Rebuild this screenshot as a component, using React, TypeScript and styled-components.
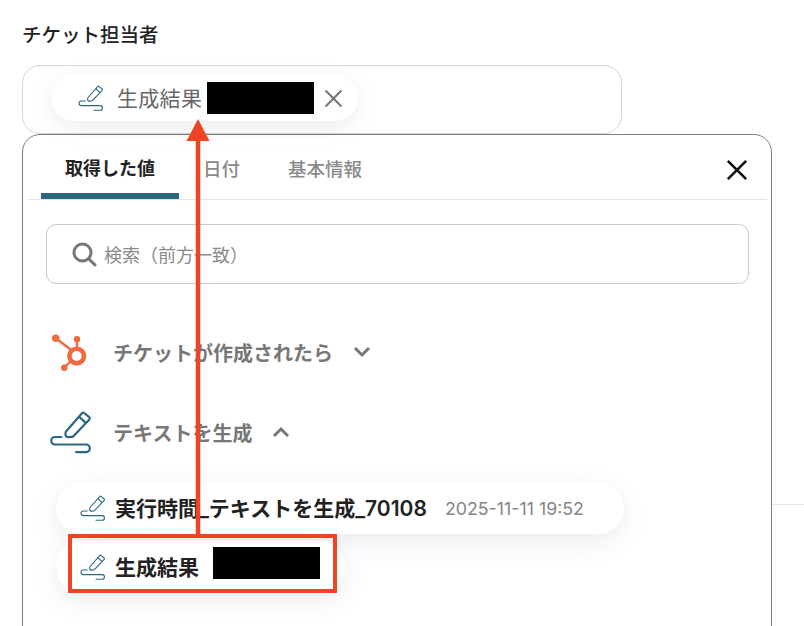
import React from 'react';
import styled, { createGlobalStyle } from 'styled-components';

const GlobalStyle = createGlobalStyle`
  html, body {
    margin: 0;
    background: #fff;
    font-family: Inter, "Noto Sans CJK JP", sans-serif;
  }
`;

const Page = styled.div`
  position: relative;
  width: 804px;
  height: 626px;
  overflow: hidden;
  padding: 22px 0 0 22px;
  box-sizing: border-box;
  background: linear-gradient(#e6e6e6, #e6e6e6) no-repeat 772px 504px / 32px 1px #fff;
`;

const Label = styled.div`
  font-size: 19.5px;
  line-height: 26px;
  font-weight: 500;
  color: #222;
  margin-bottom: 17px;
`;

const Field = styled.div`
  width: 600px;
  height: 69px;
  box-sizing: border-box;
  border: 1px solid #d4d5da;
  border-radius: 18px;
  padding: 9px 0 0 28px;
`;

const Chip = styled.div`
  display: inline-flex;
  align-items: center;
  height: 46px;
  width: 307px;
  box-sizing: border-box;
  padding-left: 27px;
  border-radius: 23px;
  background: #fff;
  box-shadow: 0 6px 24px rgba(0, 0, 0, 0.08);
  color: #666;
  font-size: 21px;
`;

const ChipText = styled.span`
  margin-left: 13px;
  white-space: nowrap;
  letter-spacing: 0.3px;
  margin-bottom: 2px;
`;

const Redacted = styled.span<{ $gap: number; $lift: number }>`
  display: inline-block;
  flex: none;
  width: 107px;
  height: 32px;
  margin-left: ${p => p.$gap}px;
  margin-bottom: ${p => p.$lift}px;
  background: #000;
`;

const ChipClose = styled.svg`
  flex: none;
  width: 19px;
  height: 19px;
  margin-left: 10px;
  stroke: #777;
  stroke-width: 2;
  fill: none;
`;

const Panel = styled.div`
  width: 750px;
  height: 520px;
  box-sizing: border-box;
  border: 1px solid #7d7d7d;
  border-radius: 18px;
  background: #fff;
`;

const TabBar = styled.div`
  display: flex;
  align-items: flex-end;
  position: relative;
  height: 64px;
  margin: 0 4px 0 5px;
  padding-left: 13px;
  border-bottom: 1px solid #e4e4e6;
`;

const Tab = styled.div<{ $active?: boolean }>`
  height: 58px;
  box-sizing: border-box;
  padding: 15px 24px 0;
  font-size: ${p => (p.$active ? 18 : 18.5)}px;
  line-height: 26px;
  font-weight: ${p => (p.$active ? 700 : 500)};
  color: ${p => (p.$active ? '#222' : '#8a8a8a')};
  border-bottom: ${p => (p.$active ? '6px solid #2b6680' : '6px solid transparent')};
  border-radius: ${p => (p.$active ? '6px 6px 0 0' : '0')};
  white-space: nowrap;
`;

const CloseIcon = styled.svg`
  margin-left: auto;
  align-self: flex-start;
  width: 22px;
  height: 22px;
  margin-top: 24px;
  margin-right: 19px;
  stroke: #111;
  stroke-width: 2.2;
  fill: none;
`;

const SearchBox = styled.div`
  display: flex;
  align-items: center;
  gap: 7px;
  width: 703px;
  height: 60px;
  box-sizing: border-box;
  margin: 24px 0 0 23px;
  padding-left: 25px;
  border: 1px solid #c9c9c9;
  border-radius: 10px;
  color: #8a8a8a;
  font-size: 18px;
`;

const SearchIcon = styled.svg`
  width: 25px;
  height: 25px;
  stroke: #777;
  stroke-width: 3;
  fill: none;
  stroke-linecap: round;
`;

const Sections = styled.div`
  display: flex;
  flex-direction: column;
  gap: 20px;
  margin-top: 38px;
`;

const Section = styled.div`
  display: flex;
  align-items: center;
  height: 60px;
  padding-left: 27px;
  color: #777;
  font-size: 20px;
  font-weight: 700;
`;

const SectionIcon = styled.div`
  width: 63px;
  flex: none;
  display: flex;
`;

const Chevron = styled.svg`
  margin-left: 20px;
  width: 18px;
  height: 12px;
  stroke: #777;
  stroke-width: 3;
  fill: none;
`;

const Values = styled.div`
  display: flex;
  flex-direction: column;
  align-items: flex-start;
  gap: 7px;
  margin: 20px 0 0 33px;
`;

const Value = styled.div<{ $width: number }>`
  display: flex;
  align-items: center;
  width: ${p => p.$width}px;
  height: 52px;
  box-sizing: border-box;
  padding-left: 24px;
  border-radius: 26px;
  background: #fff;
  box-shadow: 0 8px 28px rgba(0, 0, 0, 0.08);
  white-space: nowrap;
`;

const ValueName = styled.span`
  margin-left: 9px;
  margin-bottom: 2px;
  font-size: 21px;
  font-weight: 600;
  color: #222;
`;

const ValueDate = styled.span`
  margin-left: 18px;
  font-size: 17.8px;
  color: #858585;
`;

const Highlight = styled.div`
  position: absolute;
  left: 68px;
  top: 534px;
  width: 269px;
  height: 59px;
  box-sizing: border-box;
  border: 4px solid #ee4423;
`;

const Arrow = styled.svg`
  position: absolute;
  left: 186px;
  top: 119px;
  width: 24px;
  height: 417px;
`;

const PencilSvg = styled.svg<{ $big?: boolean }>`
  flex: none;
  width: ${p => (p.$big ? 42 : 26)}px;
  height: ${p => (p.$big ? 46 : 28)}px;
  stroke: #2b6680;
  stroke-width: ${p => (p.$big ? 2.2 : 1.8)};
  fill: none;
  stroke-linecap: round;
  stroke-linejoin: round;
`;

const PencilIcon: React.FC<{ big?: boolean }> = ({ big }) => (
  <PencilSvg $big={big} viewBox="0 0 42 46">
    <path d="M16.2 22.2 32 4.2a1.6 1.6 0 0 1 2.2-.2l5 4.2a1.6 1.6 0 0 1 .2 2.2L23.6 27a2.6 2.6 0 0 1-1.8.9l-3.6.2a2.5 2.5 0 0 1-2.7-2.4v-1.6a2.6 2.6 0 0 1 .7-1.9z" />
    <path d="M29.4 8l6 5.6" />
    <path d="M11.5 28H5a3.7 3.7 0 0 0 0 7.5H36a3.8 3.8 0 0 1 0 7.6H26" />
  </PencilSvg>
);

const HubspotIcon = () => (
  <svg width="38" height="40" viewBox="0 0 38 40" fill="#f0693f">
    <circle cx="5.7" cy="6.3" r="3.7" />
    <circle cx="27" cy="7.3" r="3.2" />
    <circle cx="14.3" cy="35.7" r="3.2" />
    <path d="M5.7 6.3 22 18.5M27 7.3V18M14.3 35.7 21 29" stroke="#f0693f" strokeWidth="2.4" fill="none" />
    <circle cx="26.7" cy="24" r="7.3" fill="none" stroke="#f0693f" strokeWidth="4.6" />
  </svg>
);

const Cross: React.FC = () => <path d="M1.5 1.5 16.5 16.5M16.5 1.5 1.5 16.5" />;

export default function App() {
  return (
    <Page>
      <GlobalStyle />
      <Label>チケット担当者</Label>
      <Field>
        <Chip>
          <PencilIcon />
          <ChipText>生成結果</ChipText>
          <Redacted $gap={5} $lift={0} />
          <ChipClose viewBox="0 0 18 18"><Cross /></ChipClose>
        </Chip>
      </Field>
      <Panel>
        <TabBar>
          <Tab $active>取得した値</Tab>
          <Tab>日付</Tab>
          <Tab>基本情報</Tab>
          <CloseIcon viewBox="0 0 18 18"><Cross /></CloseIcon>
        </TabBar>
        <SearchBox>
          <SearchIcon viewBox="0 0 25 25">
            <circle cx="10.5" cy="10.5" r="8.5" />
            <path d="M17 17l6 6" />
          </SearchIcon>
          検索（前方一致）
        </SearchBox>
        <Sections>
          <Section>
            <SectionIcon><HubspotIcon /></SectionIcon>
            チケットが作成されたら
            <Chevron viewBox="0 0 18 12"><path d="M2 2l7 7 7-7" /></Chevron>
          </Section>
          <Section>
            <SectionIcon><PencilIcon big /></SectionIcon>
            テキストを生成
            <Chevron viewBox="0 0 18 12"><path d="M2 10l7-7 7 7" /></Chevron>
          </Section>
        </Sections>
        <Values>
          <Value $width={568}>
            <PencilIcon />
            <ValueName>実行時間_テキストを生成_70108</ValueName>
            <ValueDate>2025-11-11 19:52</ValueDate>
          </Value>
          <Value $width={289}>
            <PencilIcon />
            <ValueName>生成結果</ValueName>
            <Redacted $gap={14} $lift={8} />
          </Value>
        </Values>
      </Panel>
      <Arrow viewBox="0 0 24 417">
        <path d="M12 0 23.5 22H.5z" fill="#ee4423" />
        <path d="M12 20V417" stroke="#ee4423" strokeWidth="4.5" />
      </Arrow>
      <Highlight />
    </Page>
  );
}
